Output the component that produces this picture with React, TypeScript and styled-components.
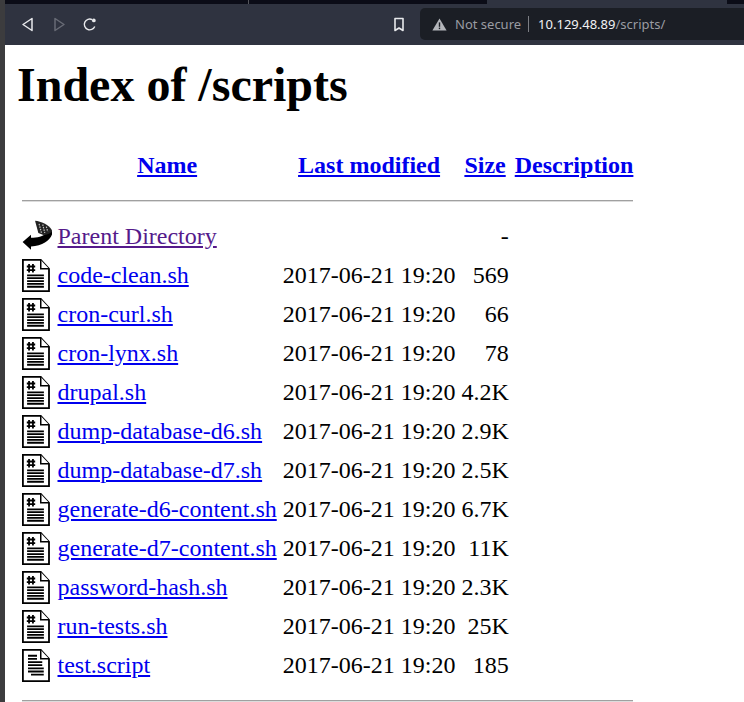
import { createGlobalStyle, styled } from "styled-components";

const GlobalStyle = createGlobalStyle`
  html, body {
    margin: 0;
    padding: 0;
    background: #fff;
  }
`;

const Screen = styled.div`
  width: 744px;
  height: 702px;
  display: flex;
  overflow: hidden;
  background: #fff;
`;

const LeftEdge = styled.div`
  width: 5px;
  flex: none;
  background: #3c3c3e;
`;

const Window = styled.div`
  flex: 1;
  min-width: 0;
  display: flex;
  flex-direction: column;
`;

const TabStrip = styled.div`
  height: 4px;
  flex: none;
  display: flex;
  background: #0b0c17;
`;

const TabDivider = styled.div`
  width: 1px;
  margin-left: 243px;
  background: #55565c;
`;

const ActiveTab = styled.div`
  width: 240px;
  margin-left: 238px;
  background: #2f3340;
`;

const Toolbar = styled.div`
  height: 40px;
  padding-bottom: 1px;
  flex: none;
  display: flex;
  align-items: center;
  background: #2f3340;
  padding-left: 15px;
`;

const NavButton = styled.div<{ $gap: number }>`
  width: 14px;
  height: 16px;
  flex: none;
  margin-right: ${(p) => p.$gap}px;
  display: flex;
  align-items: center;
  justify-content: center;
`;

const AddressBar = styled.div`
  flex: 1;
  height: 32px;
  margin-left: 14px;
  display: flex;
  align-items: center;
  padding-left: 12px;
  border-radius: 5px 0 0 5px;
  background: #1b1e25;
  font-family: "Noto Sans", "Open Sans", sans-serif;
  font-size: 13px;
  white-space: nowrap;
`;

const NotSecure = styled.span`
  margin-left: 8px;
  color: #9a9ca2;
`;

const Separator = styled.span`
  width: 1px;
  height: 16px;
  margin: 0 9px 0 7px;
  background: #7c7e84;
`;

const Host = styled.span`
  color: #f1f2f4;
`;

const Path = styled.span`
  color: #9a9ca2;
`;

const Page = styled.main`
  flex: 1;
  padding: 12px 0 0 12px;
  font-family: "Liberation Serif", "Times New Roman", serif;
  font-size: 24px;
  color: #000;
`;

const Title = styled.h1`
  margin: 0 0 18px;
  font-size: 48px;
  line-height: 55px;
  font-weight: bold;
`;

const Listing = styled.table`
  border-spacing: 3px;
`;

const HeadCell = styled.th`
  padding: 19px 1.5px 16px;
  line-height: 27px;
  font-weight: bold;
  text-align: center;
`;

const RuleCell = styled.th<{ $top: number }>`
  padding: ${(p) => p.$top}px 1.5px 1.5px;
  height: 14px;
  vertical-align: top;
`;

const Rule = styled.div`
  height: 2px;
  box-sizing: border-box;
  border-top: 1px solid #a0a0a0;
  border-bottom: 1px solid #dcdcdc;
`;

const Cell = styled.td<{ $align?: string }>`
  padding: 1.5px;
  height: 33px;
  vertical-align: middle;
  white-space: nowrap;
  text-align: ${(p) => p.$align ?? "left"};
`;

const EntryLink = styled.a<{ $visited?: boolean }>`
  color: ${(p) => (p.$visited ? "#551a8b" : "#0000ee")};
  text-decoration: underline;
`;

const IconSvg = styled.svg`
  display: block;
  width: 30px;
  height: 33px;
`;

const BackIcon = () => (
  <svg width="13" height="15" viewBox="0 0 13 15" fill="none">
    <path d="M11 1.5 L2 7.5 L11 13.5 Z" stroke="#e8e9ec" strokeWidth="1.5" strokeLinejoin="round" />
  </svg>
);

const ForwardIcon = () => (
  <svg width="13" height="15" viewBox="0 0 13 15" fill="none">
    <path d="M2 1.5 L11 7.5 L2 13.5 Z" stroke="#686b75" strokeWidth="1.5" strokeLinejoin="round" />
  </svg>
);

const ReloadIcon = () => (
  <svg width="15" height="15" viewBox="0 0 15 15" fill="none">
    <path d="M12.6 9.6 A5.8 5.8 0 1 1 9.8 2.2" stroke="#e8e9ec" strokeWidth="1.5" />
    <circle cx="11.6" cy="3.2" r="2" fill="#e8e9ec" />
  </svg>
);

const BookmarkIcon = () => (
  <svg width="12" height="15" viewBox="0 0 12 15" fill="none">
    <path d="M2 1.5 H10 V13.5 L6 11 L2 13.5 Z" stroke="#e8e9ec" strokeWidth="1.6" strokeLinejoin="round" />
  </svg>
);

const WarningIcon = () => (
  <svg width="15" height="13" viewBox="0 0 15 13">
    <path d="M7.5 0.5 L14.6 12.6 H0.4 Z" fill="#b4b6bb" />
    <rect x="6.8" y="4.4" width="1.4" height="4.4" fill="#1b1e25" />
    <rect x="6.8" y="9.6" width="1.4" height="1.5" fill="#1b1e25" />
  </svg>
);

const ParentIcon = () => (
  <IconSvg viewBox="0 0 20 22">
    <path d="M0.4 14.7 L6 9.8 V11.8 C10 11.8 14 11.5 17 8 L20.4 7.5 C20.4 12 15 17.5 6 17.6 V19.8 Z" fill="#000" />
    <path d="M8.7 0.5 C13 1 18 3 20.4 7.5 C19 9 17 10 14.2 10 L10.9 8.7 Z" fill="#222" />
    <path d="M11.4 2.6 L13 8.6 M13.8 3 L15.2 8.6 M16.2 4.4 L17.2 7.8" stroke="#c4c4c4" strokeWidth="0.8" strokeDasharray="1 0.7" />
  </IconSvg>
);

const ScriptIcon = () => (
  <IconSvg viewBox="0 0 20 22">
    <path d="M0.6 0.6 H12.5 L18 6.5 V21.4 H0.6 Z" fill="#fff" stroke="#000" strokeWidth="1.2" />
    <path d="M12.5 0.6 V6.5 H18" fill="#fff" stroke="#000" strokeWidth="1" />
    <path d="M4.7 3.4 V9 M7.3 3.4 V9 M3.2 5 H8.8 M3.2 7.4 H8.8" stroke="#000" strokeWidth="1.2" />
    <path d="M3.4 10.9 H14.6 M3.4 12.8 H14.6 M3.4 14.7 H14.6 M3.4 16.6 H14.6 M3.4 18.5 H14.6" stroke="#000" strokeWidth="1.2" />
  </IconSvg>
);

const TextIcon = () => (
  <IconSvg viewBox="0 0 20 22">
    <path d="M0.6 0.6 H12.5 L18 6.5 V21.4 H0.6 Z" fill="#fff" stroke="#000" strokeWidth="1.2" />
    <path d="M12.5 0.6 V6.5 H18" fill="#fff" stroke="#000" strokeWidth="1" />
    <path d="M4 4.5 H10 M4 6.6 H10 M4 8.7 H13.5 M4 10.8 H13.5 M4 12.9 H14.5 M4 15 H14.5 M6 17.1 H14.5" stroke="#000" strokeWidth="1.2" />
  </IconSvg>
);

const files = [
  { name: "code-clean.sh", size: "569" },
  { name: "cron-curl.sh", size: "66" },
  { name: "cron-lynx.sh", size: "78" },
  { name: "drupal.sh", size: "4.2K" },
  { name: "dump-database-d6.sh", size: "2.9K" },
  { name: "dump-database-d7.sh", size: "2.5K" },
  { name: "generate-d6-content.sh", size: "6.7K" },
  { name: "generate-d7-content.sh", size: "11K" },
  { name: "password-hash.sh", size: "2.3K" },
  { name: "run-tests.sh", size: "25K" },
  { name: "test.script", size: "185", plain: true },
];

export default function App() {
  return (
    <Screen>
      <GlobalStyle />
      <LeftEdge />
      <Window>
        <TabStrip>
          <TabDivider />
          <ActiveTab />
        </TabStrip>
        <Toolbar>
          <NavButton $gap={18}>
            <BackIcon />
          </NavButton>
          <NavButton $gap={17}>
            <ForwardIcon />
          </NavButton>
          <NavButton $gap={295}>
            <ReloadIcon />
          </NavButton>
          <NavButton $gap={0}>
            <BookmarkIcon />
          </NavButton>
          <AddressBar>
            <WarningIcon />
            <NotSecure>Not secure</NotSecure>
            <Separator />
            <Host>10.129.48.89</Host>
            <Path>/scripts/</Path>
          </AddressBar>
        </Toolbar>
        <Page>
          <Title>Index of /scripts</Title>
          <Listing>
            <thead>
              <tr>
                <HeadCell />
                <HeadCell>
                  <EntryLink href="#">Name</EntryLink>
                </HeadCell>
                <HeadCell>
                  <EntryLink href="#">Last modified</EntryLink>
                </HeadCell>
                <HeadCell>
                  <EntryLink href="#">Size</EntryLink>
                </HeadCell>
                <HeadCell>
                  <EntryLink href="#">Description</EntryLink>
                </HeadCell>
              </tr>
              <tr>
                <RuleCell colSpan={5} $top={1.5}>
                  <Rule />
                </RuleCell>
              </tr>
            </thead>
            <tbody>
              <tr>
                <Cell>
                  <ParentIcon />
                </Cell>
                <Cell>
                  <EntryLink href="#" $visited>
                    Parent Directory
                  </EntryLink>
                </Cell>
                <Cell />
                <Cell $align="right">-</Cell>
                <Cell />
              </tr>
              {files.map((file) => (
                <tr key={file.name}>
                  <Cell>{file.plain ? <TextIcon /> : <ScriptIcon />}</Cell>
                  <Cell>
                    <EntryLink href="#">{file.name}</EntryLink>
                  </Cell>
                  <Cell>2017-06-21 19:20</Cell>
                  <Cell $align="right">{file.size}</Cell>
                  <Cell />
                </tr>
              ))}
              <tr>
                <RuleCell colSpan={5} $top={13.5}>
                  <Rule />
                </RuleCell>
              </tr>
            </tbody>
          </Listing>
        </Page>
      </Window>
    </Screen>
  );
}
